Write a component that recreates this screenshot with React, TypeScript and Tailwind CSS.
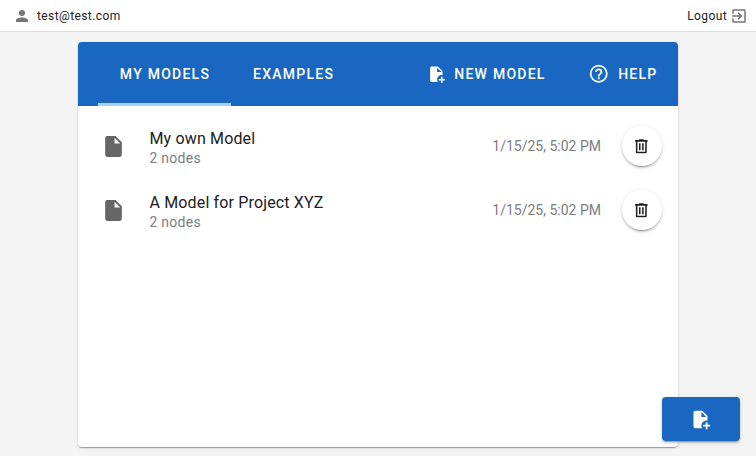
import React from "react";

const icons = {
  account:
    "M12,4A4,4 0 0,1 16,8A4,4 0 0,1 12,12A4,4 0 0,1 8,8A4,4 0 0,1 12,4M12,14C16.42,14 20,15.79 20,18V20H4V18C4,15.79 7.58,14 12,14Z",
  exit: "M19,3H5C3.89,3 3,3.89 3,5V9H5V5H19V19H5V15H3V19A2,2 0 0,0 5,21H19A2,2 0 0,0 21,19V5C21,3.89 20.1,3 19,3M10.08,15.58L11.5,17L16.5,12L11.5,7L10.08,8.41L12.67,11H3V13H12.67L10.08,15.58Z",
  file: "M13,9V3.5L18.5,9M6,2C4.89,2 4,2.89 4,4V20A2,2 0 0,0 6,22H18A2,2 0 0,0 20,20V8L14,2H6Z",
  filePlus:
    "M14 2H6C4.89 2 4 2.89 4 4V20C4 21.11 4.89 22 6 22H13.81C13.28 21.09 13 20.05 13 19C13 15.69 15.69 13 19 13C19.34 13 19.67 13.03 20 13.08V8L14 2M13 9V3.5L18.5 9H13M23 20H20V23H18V20H15V18H18V15H20V18H23V20Z",
  help: "M11,18H13V16H11V18M12,2A10,10 0 0,0 2,12A10,10 0 0,0 12,22A10,10 0 0,0 22,12A10,10 0 0,0 12,2M12,20C7.59,20 4,16.41 4,12C4,7.59 7.59,4 12,4C16.41,4 20,7.59 20,12C20,16.41 16.41,20 12,20M12,6A4,4 0 0,0 8,10H10A2,2 0 0,1 12,8A2,2 0 0,1 14,10C14,12 11,11.75 11,15H13C13,12.75 16,12.5 16,10A4,4 0 0,0 12,6Z",
  trash:
    "M9,3V4H4V6H5V19A2,2 0 0,0 7,21H17A2,2 0 0,0 19,19V6H20V4H15V3H9M7,6H17V19H7V6M9,8V17H11V8H9M13,8V17H15V8H13Z",
};

function Icon({ name, className }: { name: keyof typeof icons; className: string }) {
  return (
    <svg viewBox="0 0 24 24" fill="currentColor" aria-hidden="true" className={`shrink-0 ${className}`}>
      <path d={icons[name]} />
    </svg>
  );
}

const models = [
  { title: "My own Model", nodes: "2 nodes", date: "1/15/25, 5:02 PM" },
  { title: "A Model for Project XYZ", nodes: "2 nodes", date: "1/15/25, 5:02 PM" },
];

export default function App() {
  return (
    <div className="relative flex h-[456px] w-[756px] flex-col overflow-hidden bg-[#f4f4f4] font-[Roboto,sans-serif] text-[#212121]">
      <header className="flex h-8 shrink-0 items-center justify-between border-b border-[#dcdcdc] bg-white pr-2 pl-[13px] text-xs tracking-[0.4px]">
        <div className="flex items-center gap-1.5">
          <Icon name="account" className="size-[18px] text-[#757575]" />
          <span>test@test.com</span>
        </div>
        <div className="flex items-center gap-[3px]">
          <span>Logout</span>
          <Icon name="exit" className="size-[18px] text-[#757575]" />
        </div>
      </header>

      <main className="mx-auto mt-2.5 flex h-[405px] w-[600px] flex-col overflow-hidden rounded bg-white shadow-[0_2px_1px_-1px_rgba(0,0,0,0.2),0_1px_1px_0_rgba(0,0,0,0.14),0_1px_3px_0_rgba(0,0,0,0.12)]">
        <nav className="flex h-16 shrink-0 items-stretch bg-[#1967c0] pr-5 pl-5 text-sm font-medium tracking-[1.25px] text-white">
          <button className="w-[133px] border-b-[3px] border-[#a6d2ff] pt-[3px] pl-px">MY MODELS</button>
          <button className="ml-[22px] text-left">EXAMPLES</button>
          <button className="ml-auto flex items-center gap-[9px]">
            <Icon name="filePlus" className="size-[18.67px]" />
            NEW MODEL
          </button>
          <button className="ml-[42px] flex items-center gap-[9px] pr-[0.5px]">
            <Icon name="help" className="size-[21.5px]" />
            HELP
          </button>
        </nav>
        <ul className="flex flex-col pt-2">
          {models.map((model) => (
            <li key={model.title} className="flex h-16 items-center pr-4 pl-[23px]">
              <Icon name="file" className="size-[25px] text-[#666666]" />
              <div className="ml-[23.5px] flex-1 pt-px">
                <div className="text-base leading-6 tracking-[0.15px]">{model.title}</div>
                <div className="-mt-px text-sm leading-4 tracking-[0.25px] text-[#7d7d7d]">{model.nodes}</div>
              </div>
              <span className="text-sm text-[#7d7d7d]">{model.date}</span>
              <button
                aria-label="Delete model"
                className="ml-[21px] flex size-10 items-center justify-center rounded-full bg-white shadow-[0_3px_1px_-2px_rgba(0,0,0,0.2),0_2px_2px_0_rgba(0,0,0,0.14),0_1px_5px_0_rgba(0,0,0,0.12)]"
              >
                <Icon name="trash" className="mr-px size-[18.67px]" />
              </button>
            </li>
          ))}
        </ul>
      </main>

      <button
        aria-label="New model"
        className="absolute right-4 bottom-[15px] flex h-11 w-[78px] items-center justify-center rounded bg-[#1967c0] text-white shadow-[0_3px_1px_-2px_rgba(0,0,0,0.2),0_2px_2px_0_rgba(0,0,0,0.14),0_1px_5px_0_rgba(0,0,0,0.12)]"
      >
        <Icon name="filePlus" className="mr-px size-[21px]" />
      </button>
    </div>
  );
}
